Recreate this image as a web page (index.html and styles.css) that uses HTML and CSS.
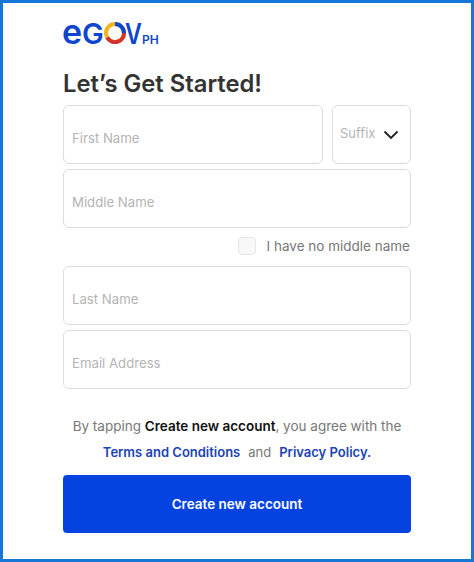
FILE: index.html
```html
<!DOCTYPE html>
<html lang="en">
<head>
  <meta charset="UTF-8" />
  <title>eGOV PH - Sign up</title>
  <meta name="viewport" content="width=device-width, initial-scale=1" />
  <link rel="stylesheet" href="styles.css">
</head>
<body>
  <div class="frame">
    <div class="logo">
      <span class="logo-e">e</span><span class="logo-word">G</span>
      <svg class="logo-o" viewBox="0 0 24 24" width="24" height="22" aria-hidden="true">
        <circle cx="12" cy="12" r="9.8" fill="none" stroke="#f4b41a" stroke-width="4.4"/>
        <path d="M3.5 17A9.8 9.8 0 0 0 21.8 12" fill="none" stroke="#d3312f" stroke-width="4.4"/>
        <path d="M12 2.2A9.8 9.8 0 0 1 21.8 12" fill="none" stroke="#0f46cf" stroke-width="4.4"/>
      </svg>
      <span class="logo-word logo-v">V</span>
      <span class="logo-ph">PH</span>
    </div>
    <h1>Let’s Get Started!</h1>
    <form class="form">
      <div class="row">
        <div class="field field-grow"><span class="hint">First Name</span></div>
        <div class="field field-suffix">
          <span class="suffix-label">Suffix</span>
          <svg viewBox="0 0 16 10" width="16" height="10" aria-hidden="true">
            <path d="M1.5 1.5 8 8l6.5-6.5" fill="none" stroke="#222" stroke-width="1.9"/>
          </svg>
        </div>
      </div>
      <div class="field"><span class="hint">Middle Name</span></div>
      <label class="no-middle"><span class="checkbox"></span>I have no middle name</label>
      <div class="field"><span class="hint">Last Name</span></div>
      <div class="field"><span class="hint">Email Address</span></div>
    </form>
    <p class="terms">By tapping <strong>Create new account</strong>, you agree with the</p>
    <p class="links"><a href="#">Terms and Conditions</a><span>and</span><a href="#">Privacy Policy.</a></p>
    <button class="submit" type="button">Create new account</button>
  </div>
</body>
</html>
```

FILE: styles.css
```css
* {
  box-sizing: border-box;
}
body {
  margin: 0;
  background: #fff;
  font-family: Inter, 'Liberation Sans', sans-serif;
}
.frame {
  width: 474px;
  height: 562px;
  border: 3px solid #1676d8;
  padding: 13px 60px 0 59px;
}
.logo {
  display: flex;
  align-items: baseline;
  height: 32px;
  color: #0f46cf;
}
.logo-e {
  font-size: 34px;
  font-weight: 600;
  line-height: 32px;
}
.logo-word {
  font-size: 29px;
  font-weight: 600;
  line-height: 32px;
}
.logo-o {
  margin-left: -1px;
}
.logo-v {
  margin: 0 -4px 0 -2px;
  transform: scaleX(0.8);
  transform-origin: left;
}
.logo-ph {
  font-size: 12px;
  font-weight: 600;
}
h1 {
  margin: 19px 0 0 1px;
  font-size: 23.8px;
  line-height: 34px;
  font-weight: 600;
  color: #333;
}
.form {
  display: flex;
  flex-direction: column;
  gap: 5px;
  margin: 4px 0 0 1px;
}
.row {
  display: flex;
  gap: 9px;
}
.field {
  display: flex;
  align-items: center;
  justify-content: space-between;
  height: 59px;
  padding: 0 8px;
  border: 1.5px solid #dcdcdc;
  border-radius: 6px;
  font-size: 13.2px;
  color: #b4b4b4;
}
.hint {
  padding-top: 7px;
}
.field-grow {
  flex: 1;
}
.field-suffix {
  width: 79px;
  padding: 0 11px 0 7px;
}
.suffix-label {
  padding-bottom: 3px;
  font-size: 13px;
}
.no-middle {
  display: flex;
  align-items: center;
  justify-content: flex-end;
  gap: 11px;
  height: 28px;
  padding: 0 1px 2px 0;
  font-size: 13.5px;
  color: #777;
}
.checkbox {
  width: 18px;
  height: 18px;
  border: 1.5px solid #e6e6e6;
  border-radius: 4px;
  background: #f8f8f8;
}
.terms,
.links {
  margin: 0 0 0 1px;
  text-align: center;
  font-size: 13.5px;
  color: #777;
}
.terms {
  margin-top: 27px;
  line-height: 20px;
}
.terms strong {
  font-weight: 600;
  color: #111;
}
.links {
  display: flex;
  justify-content: center;
  gap: 8px;
  margin-top: 6px;
  line-height: 20px;
  font-size: 13px;
}
.links a {
  color: #1a43b5;
  font-weight: 600;
  text-decoration: none;
}
.submit {
  display: block;
  width: 348px;
  height: 58px;
  margin: 13px 0 0 1px;
  border: 0;
  border-radius: 4px;
  background: #0543e0;
  color: #fff;
  font: 600 13.5px Inter, 'Liberation Sans', sans-serif;
}
```
